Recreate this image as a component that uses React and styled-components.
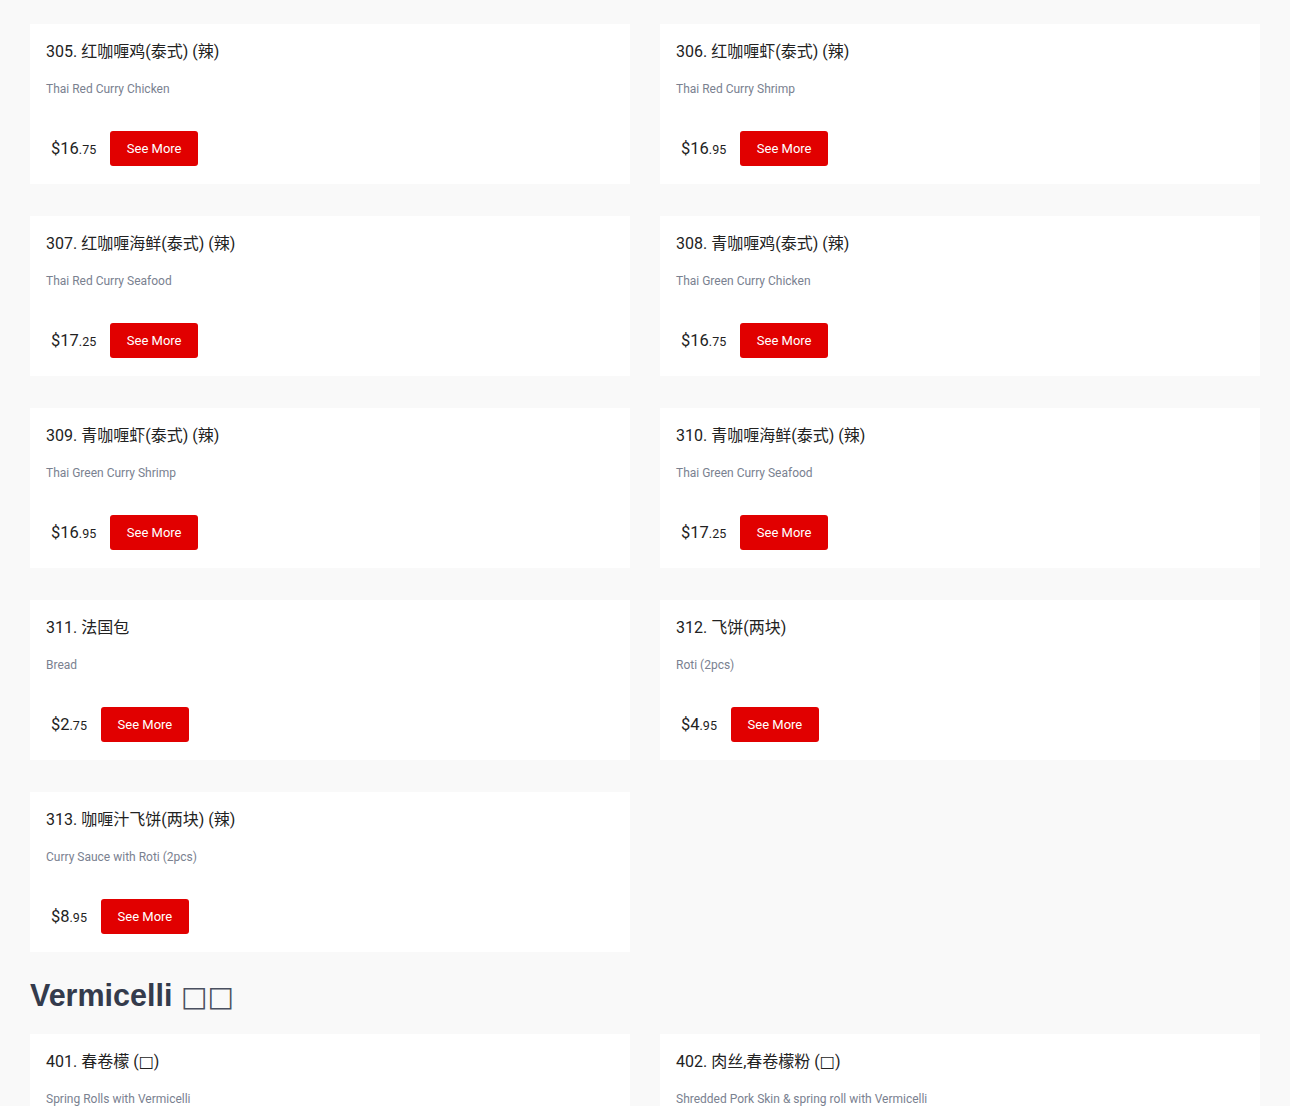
import React from "react";
import styled, { createGlobalStyle } from "styled-components";

const GlobalStyle = createGlobalStyle`
  html, body {
    margin: 0;
    padding: 0;
    background: #f9f9f9;
  }
  body {
    font-family: Roboto, "Noto Sans CJK SC", sans-serif;
  }
  * { box-sizing: border-box; }
`;

const Page = styled.div`
  padding: 24px 30px 40px;
  width: 1290px;
`;

const Grid = styled.div`
  display: grid;
  grid-template-columns: 600px 600px;
  column-gap: 30px;
  row-gap: 32px;
`;

const SectionTitle = styled.h2`
  margin: 24px 0 20px;
  font-family: "Liberation Sans", Arial, "DejaVu Sans", sans-serif;
  font-weight: 700;
  font-size: 30.5px;
  line-height: 38px;
  color: #343b4c;
`;

const Box = styled.span`
  font-family: "DejaVu Sans", sans-serif;
  font-weight: 400;
  line-height: 0;
  font-size: ${(p) => (p.$big ? "28px" : "1em")};
  color: ${(p) => (p.$big ? "#4a5060" : "inherit")};
`;

const Card = styled.div`
  background: #ffffff;
  height: 160px;
  padding: 17px 16px 18px;
  display: flex;
  flex-direction: column;
`;

const ItemName = styled.div`
  font-family: Roboto, "Noto Sans CJK SC", sans-serif;
  font-size: 16px;
  line-height: 22px;
  color: #222222;
`;

const ItemDesc = styled.div`
  margin-top: 18px;
  font-family: Roboto, sans-serif;
  font-size: 12px;
  line-height: 16px;
  color: #7a8190;
`;

const PriceRow = styled.div`
  margin-top: auto;
  display: flex;
  align-items: center;
`;

const Price = styled.span`
  padding: 0 5px;
  margin-right: 9px;
  font-family: Roboto, sans-serif;
  color: #222222;
  font-size: 16.5px;
`;

const Cents = styled.span`
  font-size: 12.5px;
`;

const SeeMore = styled.button`
  width: 88px;
  height: 35px;
  border: none;
  border-radius: 3px;
  background: #e10000;
  color: #ffffff;
  font-family: Roboto, sans-serif;
  font-size: 13px;
  padding: 0;
  cursor: pointer;
`;

const curry = [
  { name: "305. 红咖喱鸡(泰式) (辣)", desc: "Thai Red Curry Chicken", price: "16.75" },
  { name: "306. 红咖喱虾(泰式) (辣)", desc: "Thai Red Curry Shrimp", price: "16.95" },
  { name: "307. 红咖喱海鲜(泰式) (辣)", desc: "Thai Red Curry Seafood", price: "17.25" },
  { name: "308. 青咖喱鸡(泰式) (辣)", desc: "Thai Green Curry Chicken", price: "16.75" },
  { name: "309. 青咖喱虾(泰式) (辣)", desc: "Thai Green Curry Shrimp", price: "16.95" },
  { name: "310. 青咖喱海鲜(泰式) (辣)", desc: "Thai Green Curry Seafood", price: "17.25" },
  { name: "311. 法国包", desc: "Bread", price: "2.75" },
  { name: "312. 飞饼(两块)", desc: "Roti (2pcs)", price: "4.95" },
  { name: "313. 咖喱汁飞饼(两块) (辣)", desc: "Curry Sauce with Roti (2pcs)", price: "8.95" },
];

const vermicelli = [
  { name: "401. 春卷檬 (□)", desc: "Spring Rolls with Vermicelli", price: "13.95" },
  { name: "402. 肉丝,春卷檬粉 (□)", desc: "Shredded Pork Skin & spring roll with Vermicelli", price: "14.95" },
];

function withBoxes(text, big) {
  const parts = text.split("□");
  const out = [];
  parts.forEach((p, i) => {
    out.push(p);
    if (i < parts.length - 1) out.push(<Box key={i} $big={big}>□</Box>);
  });
  return out;
}

function MenuItem({ item }) {
  const [dollars, cents] = item.price.split(".");
  return (
    <Card>
      <ItemName>{withBoxes(item.name)}</ItemName>
      <ItemDesc>{item.desc}</ItemDesc>
      <PriceRow>
        <Price>
          ${dollars}
          <Cents>.{cents}</Cents>
        </Price>
        <SeeMore>See More</SeeMore>
      </PriceRow>
    </Card>
  );
}

export default function App() {
  return (
    <>
      <GlobalStyle />
      <Page>
        <Grid>
          {curry.map((it) => (
            <MenuItem key={it.name} item={it} />
          ))}
        </Grid>
        <SectionTitle>Vermicelli {withBoxes("□□", true)}</SectionTitle>
        <Grid>
          {vermicelli.map((it) => (
            <MenuItem key={it.name} item={it} />
          ))}
        </Grid>
      </Page>
    </>
  );
}
